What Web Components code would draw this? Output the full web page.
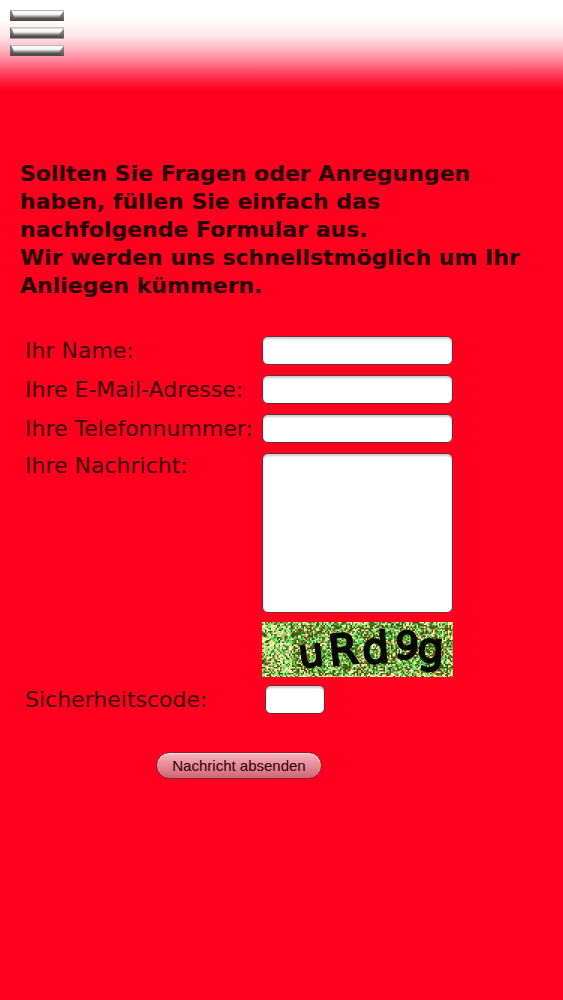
<!DOCTYPE html>
<html lang="de">
<head>
<meta charset="UTF-8">
<meta name="viewport" content="width=device-width, initial-scale=1">
<title>Kontakt</title>
<style>
  html {
    background: #ff001e;
  }

  body {
    margin: 0;
    font-family: Verdana, "DejaVu Sans", sans-serif;
    font-size: 22px;
    color: #3d0008;
  }
</style>
</head>
<body>
<contact-page>
  <site-header slot="header"></site-header>
  <intro-text>
    Sollten Sie Fragen oder Anregungen haben, füllen Sie einfach das nachfolgende Formular aus.<br>
    Wir werden uns schnellstmöglich um Ihr Anliegen kümmern.
  </intro-text>
  <contact-form>
    <form-field label="Ihr Name:" type="text"></form-field>
    <form-field label="Ihre E-Mail-Adresse:" type="email"></form-field>
    <form-field label="Ihre Telefonnummer:" type="tel"></form-field>
    <form-field label="Ihre Nachricht:" type="textarea"></form-field>
    <captcha-image code="uRd9g"></captcha-image>
    <form-field label="Sicherheitscode:" type="code"></form-field>
    <submit-button slot="actions">Nachricht absenden</submit-button>
  </contact-form>
</contact-page>

<script>
class ContactPage extends HTMLElement {
  constructor() {
    super();
    this.attachShadow({ mode: 'open' });
  }

  connectedCallback() {
    this.shadowRoot.innerHTML = `
      <style>
        :host {
          display: block;
          min-height: 100vh;
        }

        main {
          display: flex;
          flex-direction: column;
          gap: 36px;
          padding: 70px 30px 40px 20px;
        }
      </style>
      <slot name="header"></slot>
      <main><slot></slot></main>
    `;
  }
}

class SiteHeader extends HTMLElement {
  constructor() {
    super();
    this.attachShadow({ mode: 'open' });
  }

  connectedCallback() {
    this.shadowRoot.innerHTML = `
      <style>
        :host {
          display: block;
          box-sizing: border-box;
          height: 90px;
          padding: 10px;
          background: linear-gradient(#fff 0, #fffdfd 20px, #ffe6ea 36px, #ffb3be 50px, #ff7287 64px, #ff2a48 78px, #ff001e 90px);
        }

        button {
          display: block;
          padding: 0;
          border: 0;
          background: none;
          cursor: pointer;
        }

        svg {
          display: block;
          width: 54px;
          height: 46px;
        }
      </style>
      <button type="button" aria-label="Menü">
        <svg viewBox="0 0 54 46">
          <defs>
            <linearGradient id="face" x1="0" y1="0" x2="0" y2="1">
              <stop offset="0" stop-color="#999"/>
              <stop offset="0.15" stop-color="#fff"/>
              <stop offset="0.4" stop-color="#f4f4f4"/>
              <stop offset="0.6" stop-color="#999"/>
              <stop offset="0.75" stop-color="#555"/>
              <stop offset="1" stop-color="#484848"/>
            </linearGradient>
            <g id="bar">
              <rect width="54" height="11" fill="url(#face)"/>
              <path d="M0 0L2 2L4 7L0 11Z" fill="#555" opacity="0.8"/>
              <path d="M54 1L53 2L49 7L54 11Z" fill="#666" opacity="0.8"/>
            </g>
          </defs>
          <use href="#bar"/>
          <use href="#bar" y="17.5"/>
          <use href="#bar" y="35"/>
        </svg>
      </button>
    `;
  }
}

class IntroText extends HTMLElement {
  constructor() {
    super();
    this.attachShadow({ mode: 'open' });
  }

  connectedCallback() {
    this.shadowRoot.innerHTML = `
      <style>
        :host {
          display: block;
          color: #260003;
        }

        p {
          margin: 0;
          font-weight: bold;
          line-height: 28px;
        }
      </style>
      <p><slot></slot></p>
    `;
  }
}

class ContactForm extends HTMLElement {
  constructor() {
    super();
    this.attachShadow({ mode: 'open' });
  }

  connectedCallback() {
    this.shadowRoot.innerHTML = `
      <style>
        :host {
          display: block;
          --label-width: 237px;
          --control-width: 191px;
        }

        form {
          display: flex;
          flex-direction: column;
          gap: 10px;
          padding-left: 5px;
        }

        .actions {
          display: flex;
          justify-content: center;
          width: calc(var(--label-width) + var(--control-width));
          padding-top: 28px;
        }
      </style>
      <form>
        <slot></slot>
        <div class="actions"><slot name="actions"></slot></div>
      </form>
    `;
  }
}

class FormField extends HTMLElement {
  constructor() {
    super();
    this.attachShadow({ mode: 'open' });
  }

  get label() {
    return this.getAttribute('label') || '';
  }

  get type() {
    return this.getAttribute('type') || 'text';
  }

  control() {
    if (this.type === 'textarea') {
      return '<textarea id="control"></textarea>';
    }
    if (this.type === 'code') {
      return '<input id="control" class="code" type="text" autocomplete="off">';
    }
    return `<input id="control" type="${this.type}">`;
  }

  connectedCallback() {
    this.shadowRoot.innerHTML = `
      <style>
        :host {
          display: grid;
          grid-template-columns: var(--label-width) var(--control-width);
          align-items: center;
        }

        :host([type="textarea"]) {
          align-items: start;
          margin-bottom: -1px;
        }

        :host([type="code"]) {
          margin-top: -2px;
        }

        label {
          line-height: 26px;
          white-space: nowrap;
        }

        input,
        textarea {
          box-sizing: border-box;
          display: block;
          width: 100%;
          height: 29px;
          margin: 0;
          padding: 2px 6px;
          border: 1px solid #6b2b37;
          border-radius: 6px;
          background: #fff;
          box-shadow: inset 0 2px 2px #ccc;
          font: 16px "Liberation Sans", Arial, sans-serif;
          resize: none;
        }

        textarea {
          height: 160px;
        }

        .code {
          width: 60px;
          margin-left: 3px;
        }
      </style>
      <label for="control">${this.label}</label>
      ${this.control()}
    `;
  }
}

class CaptchaImage extends HTMLElement {
  constructor() {
    super();
    this.attachShadow({ mode: 'open' });
  }

  get code() {
    return this.getAttribute('code') || '';
  }

  connectedCallback() {
    // x, baseline, rotation and size of each character
    const places = [
      [38, 46, -7, 40],
      [68, 44, -6, 43],
      [101, 42, -4, 43],
      [132, 36, 4, 38],
      [155, 40, 2, 42]
    ];
    const glyphs = [...this.code].map((char, i) => {
      const [x, y, angle, size] = places[i % places.length];
      return `<text x="${x}" y="${y}" font-size="${size}" transform="rotate(${angle} ${x} ${y})">${char}</text>`;
    }).join('');

    this.shadowRoot.innerHTML = `
      <style>
        :host {
          display: grid;
          width: var(--control-width);
          height: 55px;
          margin-left: var(--label-width);
        }

        canvas,
        svg {
          grid-area: 1 / 1;
          display: block;
          width: 100%;
          height: 55px;
        }

        svg {
          overflow: visible;
        }

        text {
          font-family: "DejaVu Sans", sans-serif;
          fill: #050800;
          stroke: #050800;
          stroke-width: 2;
          stroke-linejoin: round;
        }
      </style>
      <canvas width="191" height="55"></canvas>
      <svg viewBox="0 0 191 55" role="img" aria-label="Sicherheitscode">${glyphs}</svg>
    `;
    this.drawNoise(this.shadowRoot.querySelector('canvas'));
  }

  drawNoise(canvas) {
    const ctx = canvas.getContext('2d');
    const light = ['#ffffa0', '#f4f890', '#88f078', '#58e870', '#f8c888', '#fff4c8'];
    const green = ['#30c048', '#48e058', '#288830', '#98c848', '#207028'];
    const dark = ['#583808', '#405808', '#785018', '#385010', '#a07030'];
    let seed = 7;
    const random = () => {
      seed = (seed * 16807) % 2147483647;
      return seed / 2147483647;
    };

    // bright on the left and along the edges, brown and green patches elsewhere
    for (let y = 0; y < 55; y += 1.5) {
      for (let x = 0; x < 191; x += 1.5) {
        const edge = x < 30 || y < 3 || y > 51;
        const patch = Math.sin(x / 11 + 1) + Math.cos(y / 9 + x / 23);
        const r = random();
        let colors = patch > 0.2 ? green : dark;
        if (r < (edge ? 0.6 : 0.34)) {
          colors = light;
        } else if (r > 0.75) {
          colors = patch > 0.2 ? dark : green;
        }
        ctx.fillStyle = colors[Math.floor(random() * colors.length)];
        ctx.fillRect(x, y, 2, 2);
      }
    }
  }
}

class SubmitButton extends HTMLElement {
  constructor() {
    super();
    this.attachShadow({ mode: 'open' });
  }

  connectedCallback() {
    this.shadowRoot.innerHTML = `
      <style>
        :host {
          display: block;
        }

        button {
          display: block;
          height: 27px;
          margin: 0;
          padding: 0 15px;
          border: 1px solid #852233;
          border-radius: 14px;
          background: linear-gradient(#f5b4bd, #e58c98 50%, #cf6675);
          box-shadow: inset 0 1px 1px #ffdce0;
          color: #300008;
          font: 15px "Liberation Sans", Arial, sans-serif;
          cursor: pointer;
        }
      </style>
      <button type="submit"><slot></slot></button>
    `;
  }
}

customElements.define('contact-page', ContactPage);
customElements.define('site-header', SiteHeader);
customElements.define('intro-text', IntroText);
customElements.define('contact-form', ContactForm);
customElements.define('form-field', FormField);
customElements.define('captcha-image', CaptchaImage);
customElements.define('submit-button', SubmitButton);
</script>
</body>
</html>
